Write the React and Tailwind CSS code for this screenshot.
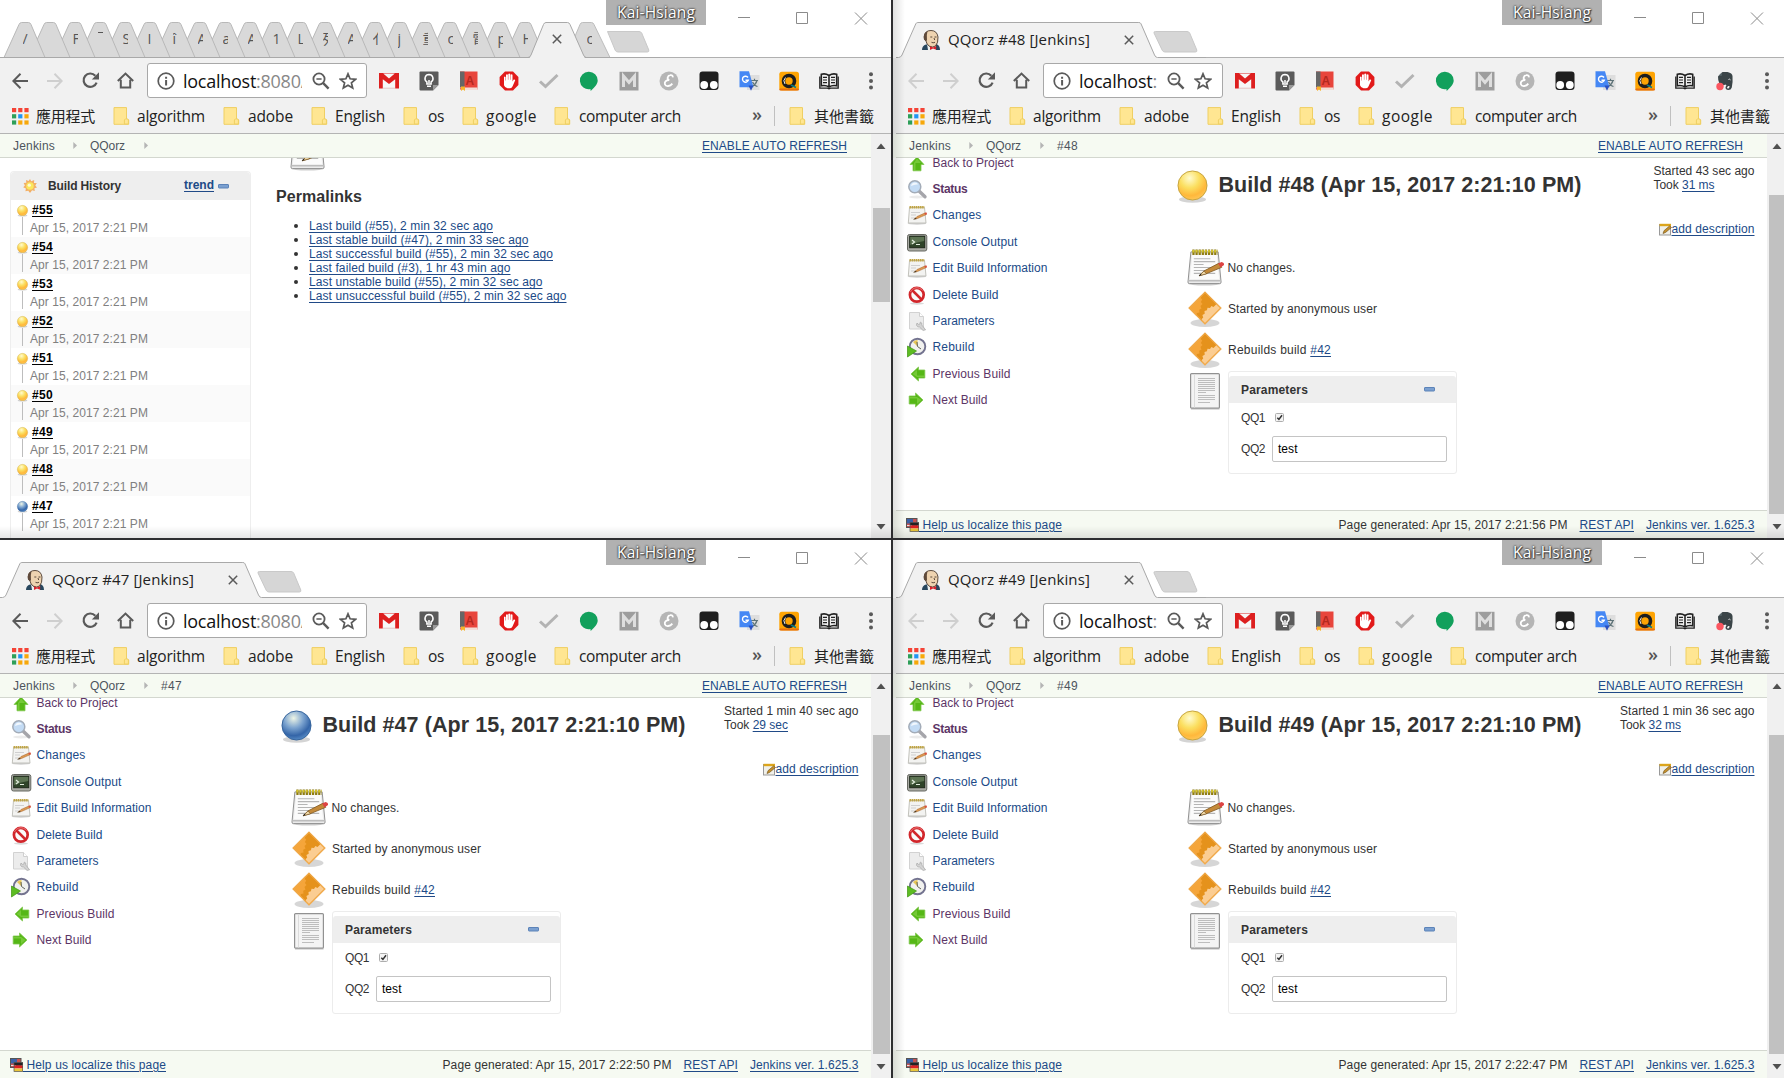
import { useLayoutEffect, useRef, useState } from 'react';

/* Single line of text, tracked so that it fills the given width. */
function T({ w, className = '', children }) {
  const ref = useRef(null);
  const [ls, setLs] = useState(0);
  useLayoutEffect(() => {
    if (!w) return;
    const el = ref.current;
    el.style.letterSpacing = '0px';
    const natural = el.getBoundingClientRect().width;
    const next = (w - natural) / el.textContent.length;
    el.style.letterSpacing = next + 'px';
    setLs(next);
  }, [w]);
  return (
    <span ref={ref} className={'inline-block shrink-0 whitespace-pre ' + className} style={{ letterSpacing: ls + 'px' }}>
      {children}
    </span>
  );
}

const UI = "font-['Open_Sans','Noto_Sans_CJK_TC',sans-serif]";
const LINK = 'text-[#204a87] underline underline-offset-2 decoration-1';

/* ---------- browser icons ---------- */

const Arrow = ({ dim, flip }) => (
  <svg width="16" height="16" viewBox="0 0 16 16" className={flip ? '-scale-x-100' : ''} fill="none" stroke={dim ? '#cfcfcf' : '#5a5a5a'} strokeWidth="2">
    <path d="M16 8H1.5M8.5 .8L1.3 8l7.2 7.2" />
  </svg>
);
const Reload = () => (
  <svg width="17" height="17" viewBox="0 0 17 17">
    <path d="M14.6 10.6A6.7 6.7 0 1 1 13.3 3.7" fill="none" stroke="#5a5a5a" strokeWidth="2.2" />
    <path d="M17 .3V7.4H9.8z" fill="#5a5a5a" />
  </svg>
);
const Home = () => (
  <svg width="17" height="17" viewBox="0 0 17 17" fill="none" stroke="#5a5a5a" strokeWidth="2">
    <path d="M.8 9L8.5 1.6 16.2 9M3.8 7.8v7.7h9.4V7.8" />
  </svg>
);
const Info = () => (
  <svg width="18" height="18" viewBox="0 0 18 18">
    <circle cx="9" cy="9" r="7.8" fill="none" stroke="#5a5a5a" strokeWidth="1.7" />
    <path d="M8.1 4.7h2v2h-2zM8.1 8h2v5.4h-2z" fill="#5a5a5a" />
  </svg>
);
const ZoomOut = () => (
  <svg width="18" height="18" viewBox="0 0 18 18" fill="none" stroke="#5a5a5a">
    <circle cx="7" cy="7" r="5.6" strokeWidth="1.8" />
    <path d="M4.4 7h5.2" strokeWidth="1.5" />
    <path d="M11.2 11.2l5.4 5.4" strokeWidth="2.4" />
  </svg>
);
const Star = () => (
  <svg width="18" height="18" viewBox="0 0 18 18" fill="none" stroke="#5a5a5a" strokeWidth="1.7">
    <path d="M9 1.8l2.1 5 5.4.5-4.1 3.5 1.3 5.3L9 13.3l-4.700 2.800 1.300-5.300L1.500 7.300l5.400-.5z" />
  </svg>
);
const Apps = () => (
  <svg width="17" height="17" viewBox="0 0 17 17">
    {['#f44336', '#f44336', '#f44336', '#2e9f59', '#2196f3', '#f7a80b', '#2e9f59', '#f7a80b', '#f7a80b'].map((c, i) => (
      <rect key={i} x={(i % 3) * 6.2} y={Math.floor(i / 3) * 6.2} width="4.2" height="4.2" fill={c} />
    ))}
  </svg>
);
const Folder = () => (
  <svg width="17" height="18" viewBox="0 0 17 18" fill="#ffe692" stroke="#efcf63" strokeWidth="1">
    <path d="M1 .6h12.500v11.400h1.200l1 1v4.300H1z" />
    <path d="M11.400 17v-4l1.200-1.200h1.600l1.200 1.200v4z" />
  </svg>
);
const Menu = () => (
  <svg width="4" height="18" viewBox="0 0 4 18" fill="#5a5a5a">
    <circle cx="2" cy="2.300" r="2" /><circle cx="2" cy="9" r="2" /><circle cx="2" cy="15.500" r="2" />
  </svg>
);

const EXT = {
  gmail: (
    <g>
      <rect x="0" y="2" width="20" height="15.500" fill="#f7f7f7" />
      <path d="M0 2h20v15.500h-3.800V8.200L10 13 3.800 8.200v9.300H0z" fill="#dd1f1f" />
      <path d="M4.200 2.600h11.600L10 7.600z" fill="#f7f7f7" />
      <path d="M3.800 17.200h12.400" stroke="#d9a4a4" strokeWidth=".6" />
    </g>
  ),
  keep: (
    <g>
      <path d="M1.500.5h17q1 0 1 1V14l-5.500 5.500H1.500q-1 0-1-1v-17q0-1 1-1z" fill="#5b5b5b" />
      <path d="M19.500 14L14 19.500V14z" fill="#9a9a9a" />
      <path d="M10 3.500a4 4 0 0 1 2.100 7.400v2H7.900v-2A4 4 0 0 1 10 3.500zM8 15.300h4M10 9v3" fill="none" stroke="#fff" strokeWidth="1.500" />
    </g>
  ),
  dict: (
    <g>
      <path d="M1 .5h17.500v18H1z" fill="#e8453c" />
      <path d="M1 .5h4.500v16H1z" fill="#666" />
      <path d="M1 16.500h17.500v2.500H3z" fill="#f4ddd6" />
      <path d="M2 15.500h4v4.500l-2-1.500-2 1.500z" fill="#f7b32b" />
      <text x="6.500" y="14" fontSize="12" fontWeight="700" fill="#b5281f" fontFamily="Liberation Sans">A</text>
    </g>
  ),
  abp: (
    <g>
      <path d="M6 .6h8L19.400 6v8L14 19.400H6L.6 14V6z" fill="#e21a1a" />
      <path d="M5 10.500V6q.9-.9 1.600 0v3.500h.4V3.800q1-1 1.900 0v5h.4V2.900q1-1 1.900 0v5.900h.4V3.800q1-.9 1.900 0v6.700l1.200-2q1.300-.3 1.500.7l-2.600 6q-.8 1.900-2.500 2.100H8.500q-2.800-.5-3.500-3z" fill="#fff" />
    </g>
  ),
  check: <path d="M1 10.500l5.500 5L18.500 4" fill="none" stroke="#b3b3b3" strokeWidth="3" />,
  hang: <path d="M10 .8a8.700 8.700 0 0 1 8.700 8.700c0 4-3.700 7-7 10.500l-.3-2A8.700 8.700 0 1 1 10 .8z" fill="#12a05c" />,
  m: (
    <g>
      <rect x=".5" y=".8" width="19" height="18.700" fill="#9d9d9d" />
      <path d="M4.500 16V5l5.500 6.500L15.500 5v11" fill="none" stroke="#dedede" strokeWidth="3" />
    </g>
  ),
  e: (
    <g>
      <circle cx="10" cy="10" r="9.500" fill="#b5b5b5" />
      <path d="M13.700 6.400c.5-2-1-2.600-2.500-2.200-2.600.6-3.700 3.800-1 4.800-3.500 0-4.900 2.200-4.300 4.200.9 2.900 5.400 2.100 7.400-.6" fill="none" stroke="#fff" strokeWidth="1.800" />
    </g>
  ),
  tamper: (
    <g>
      <rect x=".5" y=".5" width="19" height="18.500" rx="3" fill="#1f1f1f" />
      <circle cx="5.200" cy="14" r="3.900" fill="#fff" /><circle cx="14.800" cy="14" r="3.900" fill="#fff" />
    </g>
  ),
  translate: (
    <g>
      <rect x="8" y="4" width="12.500" height="15" fill="#dedede" />
      <path d="M12 9.500h7M15.500 7.800v2M18 9.500c-.8 3-3 5-5 6M13.500 11c1 2 3 4 5 4.500" fill="none" stroke="#5f7479" strokeWidth="1.200" />
      <path d="M.5.300h9.500l4.500 16H.5z" fill="#4587f4" />
      <path d="M9.500 14.500h5L12 19.800z" fill="#2b50c0" />
      <path d="M9 6.500A3 3 0 1 0 9.300 9.300H6.500" fill="none" stroke="#fff" strokeWidth="1.400" />
    </g>
  ),
  orange: (
    <g>
      <rect x=".3" y=".8" width="19.700" height="18.800" rx="2.500" fill="#fea404" />
      <rect x=".3" y="17.500" width="19.700" height="2.100" rx="1" fill="#e66f10" />
      <circle cx="10" cy="10" r="5.500" fill="none" stroke="#1d1d1d" strokeWidth="3.600" />
      <path d="M6 13a5 5 0 0 1 .5-6.500" fill="none" stroke="#fff" strokeWidth=".9" />
      <path d="M12 14l5 2.500" stroke="#0c7b86" strokeWidth="1.600" />
    </g>
  ),
  book: (
    <g fill="none" stroke="#222">
      <path d="M10 4.500C7.500 2.800 4.500 2.600 2.300 3.300v11.500c2.700-.6 5.400-.3 7.700 1.200 2.300-1.500 5-1.800 7.700-1.200V3.300C15.500 2.600 12.500 2.800 10 4.500zV16" strokeWidth="1.600" />
      <path d="M.8 5.500v11.700h7.700l1.500.7 1.500-.7h7.700V5.500" strokeWidth="1.300" />
      <path d="M4 6.300h4M4 9h4M4 11.700h4M12 6.300h4M12 9h4M12 11.700h4" strokeWidth="1.200" />
    </g>
  ),
  evernote: (
    <g>
      <path d="M3 5.500L7.500 1h5q4.800 1 5 4 .5 6-.7 11.500-.7 2.500-3.500 2.500-2.800-.2-2.800-2.500t2.200-2.300v1.800q-.8 0-.8.800.2.900 1.700.6 1-.4.900-2.400-3 .3-4-1.500-3 1.600-6-.7Q2.800 9 3 5.500z" fill="#3b4548" />
      <path d="M3.500 4.700h3.300V1.500z" fill="#59676b" />
      <path d="M13.500 8.500q1.200-.9 2 .4" stroke="#f1f1f1" fill="none" />
      <circle cx="5" cy="15.500" r="3.700" fill="#fb5660" />
    </g>
  ),
};
const EXT_ORDER = ['gmail', 'keep', 'dict', 'abp', 'check', 'hang', 'm', 'e', 'tamper', 'translate', 'orange', 'book'];

const Butler = () => (
  <svg width="18" height="20" viewBox="0 0 18 20">
    <path d="M0 20q0-4.500 4-5.500l10-.5q4 1 4 6z" fill="#28475e" />
    <path d="M5 14l4 4 5-4v6H6z" fill="#eef0ee" />
    <path d="M2.300 6Q3 .5 9 .5t7 6.500q.4 6-2.500 9-3 2-6 .2Q4.500 14.500 4 11 1.800 9.500 2.300 6z" fill="#eed3b0" stroke="#4b3a2e" strokeWidth=".9" />
    <path d="M2 9.500Q.8 3 5.500 1.300 4.300 5 5 10.500l-1.400.6z" fill="#5f4a3b" />
    <path d="M8.300 7h2M12.500 7h2M9.500 12.300q1.500 1 3.500 0M12 8l.7 2" stroke="#4b3a2e" strokeWidth=".9" fill="none" />
    <path d="M8 16.300l3 1.200 3.200-1.400v3.600L11 18.600 8 20z" fill="#d8222b" />
  </svg>
);

const CloseX = () => (
  <svg width="10" height="10" viewBox="0 0 10 10" stroke="#5a5a5a" strokeWidth="1.500"><path d="M.8.8l8.400 8.400M9.200.8L.8 9.200" /></svg>
);

/* ---------- window chrome ---------- */

const MINI = ['/', '', 'F', '¯', 'S', 'I', 'î', 'A', 'a', 'A', '1', 'L', '列', 'A', '亻', 'j', '重', 'c', '電', 'p', 'H'];

function CrowdedTabs() {
  return (
    <div className="relative h-[36px] w-[660px]">
      <svg width="660" height="36" viewBox="0 0 660 36" className="block">
        <path d="M566 35.500L580 2.500q.8-2 2.500-2h9q1.700 0 2.500 2l16 33" fill="#d9d9d9" stroke="#bdbdbd" />
        <path d="M607.500 9.500h31.500q2 0 2.800 1.800l7 16.700q.5 2-1.500 2H618q-2 0-2.800-1.800z" fill="#d6d6d6" stroke="#c9c9c9" />
        {MINI.map((_, i) => 20 - i).map((i) => (
          <path key={i} transform={'translate(' + i * 25 + ' 0)'} d="M4 35.500L19 2.500q.9-2 2.500-2h7q1.600 0 2.500 2l14 33z" fill="#d9d9d9" stroke="#b8b8b8" />
        ))}
        <path d="M0 35.500H660" stroke="#a9a9a9" />
        <path d="M528.500 36.500q1.500-.5 2.500-3L543.500 2.500q.8-2 2.500-2h21.500q1.700 0 2.500 2l13.500 31q.8 2.500 2.500 3z" fill="#f1f1f1" />
        <path d="M528 35.500q2 0 3-2.500L543.500 2.500q.8-2 2.500-2h21.500q1.700 0 2.500 2l13.500 30.500q1 2.500 3 2.500" fill="none" stroke="#a9a9a9" />
      </svg>
      <div className={'absolute top-[5px] left-[12.5px] flex text-[14px] leading-[24px] text-[#555] ' + UI}>
        {MINI.map((c, i) => (
          <span key={i} className="flex h-6 w-[25px] shrink-0 justify-center"><span className="w-[5px] overflow-hidden">{c}</span></span>
        ))}
        <span className="ml-[14px] flex items-center"><CloseX /></span>
        <span className="ml-[25px] w-[5px] overflow-hidden">c</span>
      </div>
    </div>
  );
}

function SingleTab({ title }) {
  return (
    <div className="relative h-[36px] w-[310px]">
      <svg width="310" height="36" viewBox="0 0 310 36" className="block">
        <path d="M259.500 9.500H291q2 0 2.800 1.800l7 16.700q.5 2-1.500 2H269q-2 0-2.800-1.800L258 11q-.5-1.500 1.500-1.500z" fill="#d6d6d6" stroke="#c9c9c9" />
        <path d="M4 36q1-.5 2-2.500L20 1.500q.4-1 2-1h221q1.600 0 2.200 1L259 33q1 2.500 3 3z" fill="#f1f1f1" />
        <path d="M-4 35.500H2.500q2.500 0 3.500-2.500L19.800 1.800q.6-1.300 2-1.300h221q1.600 0 2.200 1.300L258.500 33q1 2.500 3 2.500H310" fill="none" stroke="#a9a9a9" />
      </svg>
      <div className={'absolute top-[7px] left-[26px] flex h-[22px] w-[212px] items-center text-[15px] text-[#222] ' + UI}>
        <Butler />
        <T w={142} className="-mt-[2px] ml-[8px]">{title}</T>
        <span className="ml-auto"><CloseX /></span>
      </div>
    </div>
  );
}

function TitleBar({ title }) {
  return (
    <div className="flex h-[58px] items-end">
      {title ? <SingleTab title={title} /> : <CrowdedTabs />}
      <div className="h-px flex-1 self-end bg-[#b0b0b0]" />
    </div>
  );
}

function WindowControls() {
  return (
    <div className="absolute top-0 left-[606px] flex">
      <div className={'flex h-[25px] w-[100px] items-center justify-center bg-[#b1b1b1] text-[15.5px] text-white [text-shadow:0_0_2px_#333,0_0_2px_#333,1px_1px_1px_#444] ' + UI}>
        <T w={78}>Kai-Hsiang</T>
      </div>
      <svg width="162" height="36" viewBox="0 0 162 36" fill="none" stroke="#8b8b8b">
        <path d="M32 17.500h12M90.500 12.500h11v11h-11zM149 12.500l12 12M161 12.500l-12 12" />
      </svg>
    </div>
  );
}

const MARKS = [
  ['algorithm', 68, 'ml-[18px]', 'ml-[7px]'],
  ['adobe', 45, 'ml-[18px]', 'ml-[8px]'],
  ['English', 50, 'ml-[18px]', 'ml-[7px]'],
  ['os', 16, 'ml-[18px]', 'ml-[8px]'],
  ['google', 51, 'ml-[18px]', 'ml-[7px]'],
  ['computer arch', 102, 'ml-[17px]', 'ml-[8px]'],
];

function Toolbar({ evernote, canGoBack }) {
  const icons = evernote ? [...EXT_ORDER, 'evernote'] : EXT_ORDER;
  return (
    <div className={'h-[76px] border-b border-[#b4b4b4] bg-[#f1f1f1] shadow-[-3px_0_0_#f1f1f1] ' + UI}>
      <div className="flex h-[45px] items-center pl-[12px]">
        <Arrow dim={!canGoBack} />
        <span className="ml-[19px]"><Arrow dim flip /></span>
        <span className="ml-[19px]"><Reload /></span>
        <span className="ml-[18px]"><Home /></span>
        <div className={'ml-[13px] flex h-[35px] items-center rounded-[3px] border border-[#a8a8a8] bg-white pl-[9px] ' + (evernote ? 'w-[180px]' : 'w-[220px]')}>
          <Info />
          <div className={'ml-[8px] overflow-hidden text-[18px] leading-[26px] text-[#111] ' + (evernote ? 'w-[80px]' : 'w-[119px]')}>
            {evernote ? (
              <T w={78}>localhost<span className="text-[#888]">:</span></T>
            ) : (
              <T w={124}>localhost<span className="text-[#888]">:8080/</span></T>
            )}
          </div>
          <span className={evernote ? 'ml-[8px]' : 'ml-[10px]'}><ZoomOut /></span>
          <span className="ml-[9px]"><Star /></span>
        </div>
        <div className="ml-[2px] flex">
          {icons.map((k) => (
            <span key={k} className="flex w-[40px] justify-center">
              <svg width="20" height="20" viewBox="0 0 20 20" overflow="visible">{EXT[k]}</svg>
            </span>
          ))}
        </div>
        <span className="ml-[20px]"><Menu /></span>
      </div>
      <div className="flex h-[26px] items-center pl-[12px] text-[15.500px] text-[#222]">
        <Apps />
        <T w={59} className="mt-px ml-[7px] text-[15px]">應用程式</T>
        {MARKS.map(([name, w, gap, inner]) => (
          <span key={name} className={'flex items-center ' + gap}>
            <Folder />
            <T w={w} className={'mt-px ' + inner}>{name}</T>
          </span>
        ))}
        <span className="ml-[71px] w-[9px] pb-1 text-[18px] font-semibold text-[#555]">»</span>
        <span className="ml-[13px] h-[20px] w-px bg-[#c0c0c0]" />
        <span className="ml-[14px]"><Folder /></span>
        <T w={60} className="mt-px ml-[8px] text-[15px]">其他書籤</T>
      </div>
    </div>
  );
}

function ScrollBar({ thumb }) {
  return (
    <div className="flex w-[20px] shrink-0 flex-col items-center bg-[#f0f0f0]">
      <svg width="10" height="24" viewBox="0 0 10 24" className="shrink-0"><path d="M.5 15L5 9.500 9.500 15z" fill="#505050" /></svg>
      <div className="flex w-[17px] flex-1 flex-col"><div className={'w-full bg-[#c1c1c1] ' + thumb} /></div>
      <svg width="10" height="24" viewBox="0 0 10 24" className="shrink-0"><path d="M.5 10L5 15.500 9.500 10z" fill="#505050" /></svg>
    </div>
  );
}

const Crumb = () => (
  <svg width="4" height="7" viewBox="0 0 4 7"><path d="M.3 0L4 3.500.3 7z" fill="#b5b5b5" /></svg>
);

function Breadcrumbs({ last }) {
  return (
    <div className="flex h-[24px] shrink-0 items-center border-b border-[#d3d7cf] bg-[#f6faf2] pr-[24px] pl-[13px] text-[12px] text-[#4d545d] shadow-[-3px_0_0_#f6faf2]">
      <T w={42}>Jenkins</T>
      <span className="ml-[18px]"><Crumb /></span>
      <T w={35} className="ml-[13px]">QQorz</T>
      <span className="ml-[19px]"><Crumb /></span>
      {last && <T w={21} className="ml-[13px]">{last}</T>}
      <T w={145} className={'ml-auto ' + LINK}>ENABLE AUTO REFRESH</T>
    </div>
  );
}

/* ---------- page icons ---------- */

function Ball({ blue, size, id }) {
  return (
    <svg width={size} height={size} viewBox="0 0 32 32" className="shrink-0" overflow="visible">
      <defs>
        <radialGradient id={id} cx=".4" cy=".25" r=".8">
          <stop offset="0" stopColor={blue ? '#eef5e6' : '#fffbcf'} />
          <stop offset=".42" stopColor={blue ? '#7ba3cf' : '#fbdf60'} />
          <stop offset=".75" stopColor={blue ? '#3465a8' : '#ffb83b'} />
          <stop offset="1" stopColor={blue ? '#5e93cb' : '#ffc95a'} />
        </radialGradient>
      </defs>
      <ellipse cx="16" cy="30.500" rx="14" ry="3.200" fill="#000" opacity=".17" />
      <circle cx="16" cy="16" r="15" fill={'url(#' + id + ')'} stroke={blue ? '#35639b' : '#c4a33f'} strokeWidth="1" />
    </svg>
  );
}

const Minus = () => (
  <svg width="11" height="5" viewBox="0 0 11 5"><rect x=".5" y=".5" width="10" height="3.500" rx=".5" fill="#7ba0d0" stroke="#5c83b8" /></svg>
);

const Sun = () => (
  <svg width="14" height="14" viewBox="0 0 14 14">
    <path d="M7 0l1.300 2.200L11.200 1l-.2 2.900 2.800.1-1.500 2.500L14 8.500l-2.600.8.400 2.800-2.700-.8L7 14l-1.700-2.300-2.900.6.500-2.800L.2 8.300 1.900 6.400.6 4l2.700-.2-.3-2.700 2.600 1z" fill="#f3b065" />
    <circle cx="7" cy="7" r="3.800" fill="#fbe75b" />
    <circle cx="6.300" cy="6.200" r="1.600" fill="#fffbd0" />
  </svg>
);

const Notepad = ({ size }) => (
  <svg width={size} height={size} viewBox="0 0 38 38" overflow="visible" className="shrink-0">
    <ellipse cx="18" cy="35.500" rx="17" ry="2" fill="#000" opacity=".2" />
    <path d="M4 3h28l3 31q0 1.500-1.500 1.500h-31Q1 35.500 1 34z" fill="#ebebeb" stroke="#8f8f8f" />
    <path d="M5.500 5h25l2.500 26H3z" fill="#fbfbfb" />
    <path d="M1.500 32.500h33" stroke="#bdbdbd" strokeWidth="1.500" />
    <path d="M7 10h17M7 13h22M7 16h10M7 19h21M7 22h12M7 25h22" stroke="#b5b5b5" strokeWidth="1.100" />
    <path d="M5.500 3.300h26" stroke="#8e7c12" strokeWidth="5.500" strokeDasharray="2.300 .9" />
    <path d="M5.500 2.300h26" stroke="#d4c32a" strokeWidth="2.500" strokeDasharray="2 1.200" />
    <path d="M12.500 27.500l5-5L33 14.500l2.700 4.300L19.500 25.500z" fill="#c48a3a" stroke="#7b5318" strokeWidth=".8" />
    <path d="M12.500 27.500l5-5 2.500 3z" fill="#efd8a7" stroke="#6d4c1d" strokeWidth=".6" />
    <path d="M12 27.800l3-1-1.300-1.300z" fill="#222" />
    <path d="M32 15l3.500-1.700q3 .5 2.500 3.200L34.500 19z" fill="#dd4444" />
  </svg>
);

const MiniNotepad = () => (
  <svg width="20" height="20" viewBox="0 0 20 20" overflow="visible">
    <ellipse cx="10" cy="18.500" rx="9.500" ry="1.200" fill="#000" opacity=".18" />
    <path d="M2.500 2.500h15L19 18H1.300z" fill="#f3f3f1" stroke="#bcbcb6" strokeWidth=".9" />
    <path d="M2.500 2.200h15" stroke="#c0a545" strokeWidth="2.600" strokeDasharray="1.600 .5" />
    <path d="M4 7.500h9M4 10h5M4 13h5" stroke="#cfcfcf" />
    <path d="M7.500 14l2.500-2.500 8.300-3.700 1 1.800-8.800 3.900z" fill="#dc9951" stroke="#a6642a" strokeWidth=".5" />
    <path d="M6 14.800l3.800-.9-1.200-1.200z" fill="#4c3b20" />
    <path d="M17.300 8.200l2-.9.8 1.700-1.800 1z" fill="#d9503f" />
  </svg>
);

const GreenArrow = ({ turn }) => (
  <svg width="20" height="20" viewBox="0 0 20 20" className={turn}>
    <path d="M10 4L17 11.500h-3v6.300H6v-6.300H3z" fill="#55b716" stroke="#7fc64c" strokeWidth=".8" />
    <path d="M10 5.500l4 4.500H8.500v7H7v-7z" fill="#8bd64e" opacity=".6" />
  </svg>
);

const SideSvg = ({ children }) => <svg width="20" height="20" viewBox="0 0 20 20" overflow="visible">{children}</svg>;

const SIDE = [
  ['Back to Project', 81, <GreenArrow />, 'text-[#5c3566]'],
  ['Status', 35, (
    <SideSvg>
      <ellipse cx="10" cy="18" rx="8" ry="1.500" fill="#000" opacity=".08" />
      <path d="M12 12l6 5.800" stroke="#a5a5aa" strokeWidth="3.400" strokeLinecap="round" />
      <circle cx="7.800" cy="7.800" r="6" fill="#c3dbf4" stroke="#a3acb8" strokeWidth="1.500" />
      <path d="M4 7q.5-3.500 4-3.500 2.500.2 3 2-3-.5-7 1.500z" fill="#f1f7fd" />
    </SideSvg>
  ), 'text-[#5c3566] font-bold'],
  ['Changes', 49, <MiniNotepad />, 'text-[#204a87]'],
  ['Console Output', 85, (
    <SideSvg>
      <rect x=".5" y="2.500" width="19.300" height="16.500" rx="2" fill="#aaaba5" stroke="#666861" />
      <rect x="2.700" y="4.200" width="15" height="11.500" fill="#2f4429" stroke="#1e2a1b" />
      <path d="M3.200 5h14v4q-7 1-14 4z" fill="#5c7352" />
      <path d="M5 8l2.500 2L5 12M9 12.500h4" stroke="#e3eedf" fill="none" strokeWidth="1.200" />
    </SideSvg>
  ), 'text-[#204a87]'],
  ['Edit Build Information', 115, <MiniNotepad />, 'text-[#204a87]'],
  ['Delete Build', 66, (
    <SideSvg>
      <ellipse cx="10" cy="18.500" rx="7" ry="1.200" fill="#000" opacity=".15" />
      <circle cx="9.800" cy="9.800" r="6.900" fill="#fafafa" stroke="#d2262b" strokeWidth="2.700" />
      <path d="M5 5l9.700 9.700" stroke="#d2262b" strokeWidth="2.600" />
      <path d="M3.500 7a7 7 0 0 1 12-1.500" stroke="#ee8a8a" strokeWidth=".8" fill="none" />
    </SideSvg>
  ), 'text-[#204a87]'],
  ['Parameters', 62, (
    <SideSvg>
      <path d="M2.500 1.500h10l4 4V18h-14z" fill="#ececec" stroke="#d2d2d2" />
      <path d="M12.500 1.500v4h4" fill="#fff" stroke="#cfcfcf" />
      <path d="M10 12q-1.500 2.500.8 3.800l1.700.2 3.600 3.500 2.500-.7-3.800-4.800q.6-2.400-1.500-3l-.3 2-1.700.4z" fill="#d3d3d3" stroke="#a9a9a9" strokeWidth=".7" />
    </SideSvg>
  ), 'text-[#204a87]'],
  ['Rebuild', 42, (
    <SideSvg>
      <circle cx="10.500" cy="9.500" r="7.800" fill="#f1f1ee" stroke="#73738f" strokeWidth="1.900" />
      <path d="M10.500 9.500L6 5q2-2 4.500-2z" fill="#e7c657" />
      <path d="M10 5l.5 4.500 3.500 2.500" fill="none" stroke="#62625c" />
      <path d="M.5 9v11L9.500 14z" fill="#5dbc22" stroke="#3f9310" strokeWidth=".7" />
    </SideSvg>
  ), 'text-[#204a87]'],
  ['Previous Build', 78, <GreenArrow turn="-rotate-90" />, 'text-[#5c3566]'],
  ['Next Build', 55, <GreenArrow turn="rotate-90" />, 'text-[#5c3566]'],
];

const Diamond = () => (
  <svg width="36" height="38" viewBox="0 0 36 38" className="shrink-0">
    <ellipse cx="18" cy="33" rx="14.500" ry="4" fill="#000" opacity=".16" />
    <path d="M18 1.500L34.500 18 18 34.500 1.500 18z" fill="#e5921c" />
    {/* small gear on the left corner */}
    <path d="M14 5.500L1.500 18l7.500 7.500 1-2.500 2.500-.5-.3-2.700 2.300-1.300-1-2.500 2-2-1.600-2 1.300-2.500-1.500-1.500z" fill="#f5a53a" />
    {/* large gear filling the lower right half */}
    <path d="M30 13.500L34.500 18 18 34.500l-3-3-.3-2.500 1.500-1.500-.8-2.500 2.300-1.200-.2-2.700 2.400-.8.6-2.500 2.500.3 1.400-2 2.100.8z" fill="#fbcd92" />
    <path d="M18 2.300L33.700 18 18 33.700 2.300 18z" fill="none" stroke="#f0a848" strokeWidth="1.100" />
  </svg>
);

const Doc = () => (
  <svg width="30" height="37" viewBox="0 0 30 37" className="shrink-0">
    <path d="M1 36h28.500" stroke="#000" opacity=".25" />
    <rect x=".6" y=".6" width="28.800" height="34.600" rx="1" fill="#f4f4f4" stroke="#919191" strokeWidth="1.200" />
    <path d="M4.500 1.500v33" stroke="#dcdcdc" />
    <path d="M8 5.500h17M8 7.500h17M8 9.500h17M8 11.500h17M8 13.500h17M8 15.500h17M8 17.500h17M8 19.500h8M8 22.500h17M8 24.500h17M8 26.500h17M8 29.500h12" stroke="#bdbdbd" strokeWidth="1.100" />
  </svg>
);

const Flags = () => (
  <svg width="13" height="14" viewBox="0 0 13 14" className="shrink-0">
    <rect x=".5" y=".5" width="10.500" height="9" fill="#c65252" stroke="#555" />
    <path d="M1 1h6v4.500H1z" fill="#3a62a8" />
    <path d="M1 7.500h5" stroke="#f1dede" />
    <rect x="4" y="4.500" width="9" height="3" fill="#222" /><rect x="4" y="7.500" width="9" height="3" fill="#d22" /><rect x="4" y="10.500" width="9" height="3" fill="#e9c63a" />
    <rect x="4" y="4.500" width="8.700" height="9" fill="none" stroke="#555" strokeWidth=".7" />
  </svg>
);

/* ---------- pages ---------- */

const PERMA = [
  ['Last build (#55), 2 min 32 sec ago', 184],
  ['Last stable build (#47), 2 min 33 sec ago', 219.5],
  ['Last successful build (#55), 2 min 32 sec ago', 244],
  ['Last failed build (#3), 1 hr 43 min ago', 201.5],
  ['Last unstable build (#55), 2 min 32 sec ago', 233.5],
  ['Last unsuccessful build (#55), 2 min 32 sec ago', 257.5],
];

function ProjectPage() {
  return (
    <div className="flex flex-1 overflow-hidden pl-[10px]">
      <div className="mt-[13px] h-[367px] w-[241px] shrink-0 overflow-hidden rounded-t-[4px] border border-b-0 border-[#eeeeee]">
        <div className="flex h-[28px] items-center rounded-t-[3px] bg-[#eeeeee] pl-[12px] text-[12px] font-bold text-[#333]">
          <Sun />
          <T w={73} className="ml-[11px]">Build History</T>
          <T w={30} className={'-mt-[2px] ml-[63px] ' + LINK}>trend</T>
          <span className="ml-[4px]"><Minus /></span>
        </div>
        {[55, 54, 53, 52, 51, 50, 49, 48, 47].map((n, i) => (
          <div key={n} className={'flex h-[37px] pl-[5px] text-[12px] ' + (i % 2 ? 'bg-[#fafafa]' : 'bg-white')}>
            <div className="flex w-[12px] flex-col items-center pt-[5px]">
              <Ball size={11} blue={n === 47} id={'hist' + n} />
              <div className="mt-px h-[18px] w-px bg-[#bdbdbd]" />
            </div>
            <div className="ml-[2px] flex flex-col items-start">
              <T w={21} className="ml-[2px] h-[19px] leading-[20px] font-bold text-black underline underline-offset-2">{'#' + n}</T>
              <T w={118} className="leading-[18px] text-[#808080]">Apr 15, 2017 2:21 PM</T>
            </div>
          </div>
        ))}
      </div>
      <div className="ml-[25px] text-[#333]">
        <div className="ml-[14px] flex h-[13px] items-end overflow-hidden"><Notepad size={37} /></div>
        <h2 className="mt-[15.5px] text-[16px] leading-[20px] font-bold"><T w={86}>Permalinks</T></h2>
        <ul className="mt-[12.5px] ml-[18px] text-[12px] leading-[14px]">
          {PERMA.map(([t, w]) => (
            <li key={t} className="flex h-[14px] items-center">
              <span className="mr-[11px] size-[4px] rounded-full bg-[#333]" />
              <T w={w} className={LINK}>{t}</T>
            </li>
          ))}
        </ul>
      </div>
    </div>
  );
}

function BuildPage({ build, blue, started, startedW, took, tookW, generated }) {
  return (
    <div className="flex min-h-0 flex-1 flex-col text-[12px] text-[#333]">
      <div className="flex min-h-0 flex-1 overflow-hidden pl-[11px]">
        <div className="-mt-[8.500px] w-[265px] shrink-0">
          {SIDE.map(([label, w, icon, cls]) => (
            <div key={label} className={'flex h-[26.400px] items-center ' + cls}>
              <span className="mr-[5.5px] w-[20px]">{icon}</span>
              <T w={w}>{label}</T>
            </div>
          ))}
        </div>
        <div className="w-[595px] shrink-0">
          <div className="flex h-[89px] pt-[6px] pr-[12.5px] pl-[5px]">
            <span className="pt-[6px]"><Ball size={31} blue={blue} id={'ball' + build} /></span>
            <h1 className="mt-[6px] ml-[10.5px] text-[21.500px] leading-[30px] font-bold">
              <T w={363}>{'Build #' + build + ' (Apr 15, 2017 2:21:10 PM)'}</T>
            </h1>
            <div className="ml-auto flex flex-col items-end">
              <div className="flex flex-col items-start leading-[14px]">
                <T w={startedW}>{started}</T>
                <T w={tookW}>Took <a className={LINK}>{took}</a></T>
              </div>
              <div className="mt-[23px] flex h-[28px] items-center">
                <svg width="13" height="13" viewBox="0 0 13 13">
                  <rect x=".5" y="1.500" width="11" height="10.500" fill="#f0f0ea" stroke="#999" />
                  <rect x=".5" y=".8" width="11.500" height="2.400" fill="#dca51c" />
                  <path d="M4 10.500l1-2.800L10.500 3l2 1.500-6 5z" fill="#c48f2c" stroke="#6b4d15" strokeWidth=".6" />
                </svg>
                <T w={83} className={LINK}>add description</T>
              </div>
            </div>
          </div>
          <div className="flex h-[41px] items-center pl-[15px]">
            <Notepad size={37} />
            <T w={68} className="ml-[3.500px]">No changes.</T>
          </div>
          <div className="flex h-[41px] items-center pl-[15px]">
            <Diamond />
            <T w={149} className="ml-[5px]">Started by anonymous user</T>
          </div>
          <div className="flex h-[41px] items-center pl-[15px]">
            <Diamond />
            <T w={103} className="ml-[5px]">Rebuilds build <a className={LINK}>#42</a></T>
          </div>
          <div className="flex items-start pl-[18px]">
            <span className="mt-[3px]"><Doc /></span>
            <div className="mt-[1px] ml-[8px] h-[103px] w-[229px] rounded-[3px] border border-[#ececec] pt-[4px]">
              <div className="flex h-[27px] items-center rounded-t-[3px] bg-[#eeeeee] pr-[21px] pl-[12px] font-bold">
                <T w={67}>Parameters</T>
                <span className="ml-auto"><Minus /></span>
              </div>
              <div className="flex h-[29px] items-center pl-[12px]">
                <T w={24}>QQ1</T>
                <svg width="9" height="9" viewBox="0 0 9 9" className="ml-[10px]">
                  <rect x=".5" y=".5" width="8" height="8" rx="1" fill="#f4f4f4" stroke="#adadad" />
                  <path d="M2.300 4.800l1.600 1.600L7 2.200" fill="none" stroke="#333" strokeWidth="1.500" />
                </svg>
              </div>
              <div className="mt-[4px] flex h-[26px] items-center pl-[12px]">
                <T w={24}>QQ2</T>
                <div className="ml-[7px] flex h-[26px] w-[175px] items-center rounded-[2px] border border-[#c4c4c4] bg-white pl-[5px] text-black"><T w={19.500}>test</T></div>
              </div>
            </div>
          </div>
        </div>
      </div>
      <div className="flex h-[28px] shrink-0 items-center border-t border-[#d3d7cf] bg-[#f6faf2] pr-[12.5px] pb-px pt-[1px] pl-[10px] shadow-[-3px_0_0_#f6faf2]">
        <Flags />
        <T w={143} className={LINK}> Help us localize this page</T>
        <T w={229} className="ml-auto">{'Page generated: Apr 15, 2017 ' + generated}</T>
        <T w={54.500} className={'ml-[12px] ' + LINK}>REST API</T>
        <T w={108.500} className={'ml-[12px] ' + LINK}>Jenkins ver. 1.625.3</T>
      </div>
    </div>
  );
}

function Browser({ right, bottomFade, title, crumb, thumb, children }) {
  return (
    <section className={'relative h-[538px] w-[891px] overflow-hidden bg-white ' + (right ? 'pl-[3px]' : '')}>
      <div className="relative flex h-full w-[891px] flex-col">
        <TitleBar title={title} />
        <WindowControls />
        <Toolbar evernote={right} canGoBack={!right} />
        <div className="flex min-h-0 flex-1">
          <div className="flex min-h-0 w-[871px] shrink-0 flex-col">
            <Breadcrumbs last={crumb} />
            {children}
          </div>
          <ScrollBar thumb={thumb} />
        </div>
      </div>
      {right && <div className="absolute inset-y-0 left-0 w-[12px] bg-gradient-to-r from-black/12 to-transparent" />}
      {bottomFade && <div className="absolute inset-x-0 bottom-0 h-[12px] bg-gradient-to-t from-black/10 to-transparent" />}
    </section>
  );
}

export default function App() {
  return (
    <main className="grid h-[1078px] w-[1784px] grid-cols-[891px_891px] grid-rows-[538px_538px] gap-[2px] overflow-hidden bg-[#2d2e30] font-['Liberation_Sans',Arial,sans-serif]">
      <Browser bottomFade thumb="mt-[50px] h-[94px]">
        <ProjectPage />
      </Browser>
      <Browser right bottomFade title="QQorz #48 [Jenkins]" crumb="#48" thumb="mt-[37px] h-[319px]">
        <BuildPage build={48} started="Started 43 sec ago" startedW={101} took="31 ms" tookW={61} generated="2:21:56 PM" />
      </Browser>
      <Browser title="QQorz #47 [Jenkins]" crumb="#47" thumb="mt-[37px] h-[319px]">
        <BuildPage build={47} blue started="Started 1 min 40 sec ago" startedW={134.500} took="29 sec" tookW={64} generated="2:22:50 PM" />
      </Browser>
      <Browser right title="QQorz #49 [Jenkins]" crumb="#49" thumb="mt-[37px] h-[319px]">
        <BuildPage build={49} started="Started 1 min 36 sec ago" startedW={134.500} took="32 ms" tookW={61} generated="2:22:47 PM" />
      </Browser>
    </main>
  );
}
